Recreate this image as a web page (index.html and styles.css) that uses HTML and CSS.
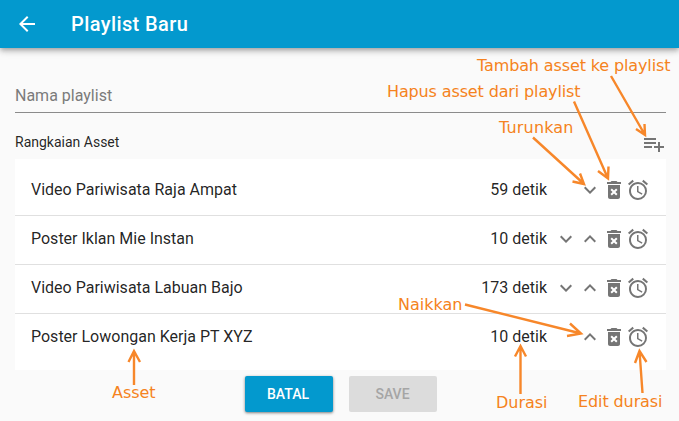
FILE: index.html
```html
<!DOCTYPE html>
<html lang="id">
<head>
<meta charset="utf-8">
<title>Playlist Baru</title>
<link rel="stylesheet" href="styles.css">
</head>
<body>
<svg class="defs" aria-hidden="true">
  <symbol id="down" viewBox="0 0 24 24"><path d="M16.59 8.59 12 13.17 7.41 8.59 6 10l6 6 6-6z"/></symbol>
  <symbol id="up" viewBox="0 0 24 24"><path d="M12 8l-6 6 1.41 1.41L12 10.83l4.59 4.58L18 14z"/></symbol>
  <symbol id="trash" viewBox="0 0 24 24"><path d="M6 19c0 1.1.9 2 2 2h8c1.1 0 2-.9 2-2V7H6v12zm2.46-7.12l1.41-1.41L12 12.59l2.12-2.12 1.41 1.41L13.41 14l2.12 2.12-1.41 1.41L12 15.41l-2.12 2.12-1.41-1.41L10.59 14l-2.13-2.12zM15.500 4l-1-1h-5l-1 1H5v2h14V4z"/></symbol>
  <symbol id="alarm" viewBox="0 0 24 24"><path d="M22 5.720l-4.6-3.860-1.290 1.530 4.600 3.860L22 5.720zM7.880 3.390L6.600 1.860 2 5.710l1.290 1.530 4.590-3.850zM12.500 8H11v6l4.750 2.850.750-1.230-4-2.370V8zM12 4c-4.970 0-9 4.030-9 9s4.020 9 9 9a9 9 0 0 0 0-18zm0 16c-3.870 0-7-3.130-7-7s3.130-7 7-7 7 3.130 7 7-3.120 7-7 7z"/></symbol>
  <symbol id="add" viewBox="0 0 24 24"><path d="M14 10H2v2h12v-2zm0-4H2v2h12V6zm4 8v-4h-2v4h-4v2h4v4h2v-4h4v-2h-4zM2 16h8v-2H2v2z"/></symbol>
  <symbol id="back" viewBox="0 0 24 24"><path d="M20 11H7.830l5.590-5.590L12 4l-8 8 8 8 1.410-1.410L7.830 13H20v-2z"/></symbol>
</svg>

<header class="appbar">
  <svg class="icon"><use href="#back"/></svg>
  <h1 class="title">Playlist Baru</h1>
</header>

<main class="content">
  <div class="field">Nama playlist</div>
  <div class="section">
    <span class="section-label">Rangkaian Asset</span>
    <svg class="icon"><use href="#add"/></svg>
  </div>
  <ul class="list">
    <li class="row">
      <span class="name">Video Pariwisata Raja Ampat</span><span class="duration">59 detik</span>
      <span class="actions"><svg class="icon"><use href="#down"/></svg><svg class="icon"><use href="#trash"/></svg><svg class="icon"><use href="#alarm"/></svg></span>
    </li>
    <li class="row">
      <span class="name">Poster Iklan Mie Instan</span><span class="duration">10 detik</span>
      <span class="actions"><svg class="icon"><use href="#down"/></svg><svg class="icon"><use href="#up"/></svg><svg class="icon"><use href="#trash"/></svg><svg class="icon"><use href="#alarm"/></svg></span>
    </li>
    <li class="row">
      <span class="name">Video Pariwisata Labuan Bajo</span><span class="duration">173 detik</span>
      <span class="actions"><svg class="icon"><use href="#down"/></svg><svg class="icon"><use href="#up"/></svg><svg class="icon"><use href="#trash"/></svg><svg class="icon"><use href="#alarm"/></svg></span>
    </li>
    <li class="row">
      <span class="name">Poster Lowongan Kerja PT XYZ</span><span class="duration">10 detik</span>
      <span class="actions"><svg class="icon"><use href="#up"/></svg><svg class="icon"><use href="#trash"/></svg><svg class="icon"><use href="#alarm"/></svg></span>
    </li>
  </ul>
  <div class="buttons">
    <button class="button primary">BATAL</button>
    <button class="button" disabled>SAVE</button>
  </div>
</main>

<svg class="notes" viewBox="0 0 679 421">
  <g class="arrows">
    <path d="M611 76 645 135M636 129 645 135 644.500 124"/>
    <path d="M574 101.500 608 178.500M598 171 608 178.500 608.500 166.500"/>
    <path d="M533 137.500 584 184M572.500 181.500 584 184 580 173.500"/>
    <path d="M465 304.500 581 333.500M570 323.500 581 333.500 567 336"/>
    <path d="M134 385V351M128.500 362 134 351 140 362"/>
    <path d="M520.500 394V346M515 356.500 520.500 346 526 356.500"/>
    <path d="M642.500 393 639.500 351M635 363 639.500 351 646.500 362"/>
  </g>
  <text x="477" y="71" textLength="193.500">Tambah asset ke playlist</text>
  <text x="387" y="97" textLength="193.500">Hapus asset dari playlist</text>
  <text x="499" y="133" textLength="74.500">Turunkan</text>
  <text x="398" y="310" textLength="64.500">Naikkan</text>
  <text x="112" y="398" textLength="43.500">Asset</text>
  <text x="496" y="408" textLength="51.500">Durasi</text>
  <text x="578" y="407" textLength="84.500">Edit durasi</text>
</svg>
</body>
</html>
```
FILE: styles.css
```css
* { box-sizing: border-box; }

body {
  margin: 0;
  height: 421px;
  overflow: hidden;
  background: #fafafa;
  color: rgba(0, 0, 0, .87);
  font-family: Roboto, "Liberation Sans", sans-serif;
  font-size: 16px;
}

.defs { display: none; }

.icon {
  display: block;
  flex: none;
  width: 24px;
  height: 24px;
  fill: #757575;
}

.appbar {
  display: flex;
  align-items: center;
  gap: 32px;
  height: 48px;
  padding: 0 15px;
  background: #0399ce;
  color: #fff;
  box-shadow: 0 2px 4px -1px rgba(0, 0, 0, .2), 0 4px 5px rgba(0, 0, 0, .14), 0 1px 10px rgba(0, 0, 0, .12);
}

.appbar .icon { fill: #fff; }

.title {
  margin: 0;
  font-size: 20px;
  font-weight: 500;
  letter-spacing: .4px;
}

.content { padding: 32px 13px 0 15px; }

.field {
  height: 33px;
  border-bottom: 1px solid #8b8b8b;
  color: #7b7b7b;
  line-height: 32px;
}

.section {
  display: flex;
  align-items: center;
  justify-content: space-between;
  height: 24px;
  margin-top: 19px;
}

.section-label {
  padding-bottom: 4px;
  font-size: 14px;
}

.list {
  margin: 3px 0 0;
  padding: 8px 0;
  background: #fff;
  list-style: none;
}

.row {
  display: flex;
  align-items: center;
  height: 48px;
  padding: 0 16px 2px;
}

.row + .row {
  height: 49px;
  border-top: 1px solid #e0e0e0;
}

.name { flex: 1; }

.name, .duration {
  line-height: 24px;
}

.actions {
  display: flex;
  justify-content: flex-end;
  width: 103px;
}

.buttons {
  display: flex;
  justify-content: center;
  gap: 16px;
  padding-top: 6px;
}

.button {
  width: 88px;
  height: 36px;
  padding: 0;
  border: 0;
  border-radius: 2px;
  background: #dcdcdc;
  color: #a5a5a5;
  font: 500 14px Roboto, "Liberation Sans", sans-serif;
}

.primary {
  padding-right: 1px;
  background: #0399ce;
  color: #fff;
  box-shadow: 0 1px 3px rgba(0, 0, 0, .5);
}

.notes {
  position: absolute;
  top: 0;
  left: 0;
  width: 679px;
  height: 421px;
  fill: #f58220;
  font: 16px "DejaVu Sans", sans-serif;
}

.arrows {
  fill: none;
  stroke: #f7872a;
  stroke-width: 2.4;
}
```
